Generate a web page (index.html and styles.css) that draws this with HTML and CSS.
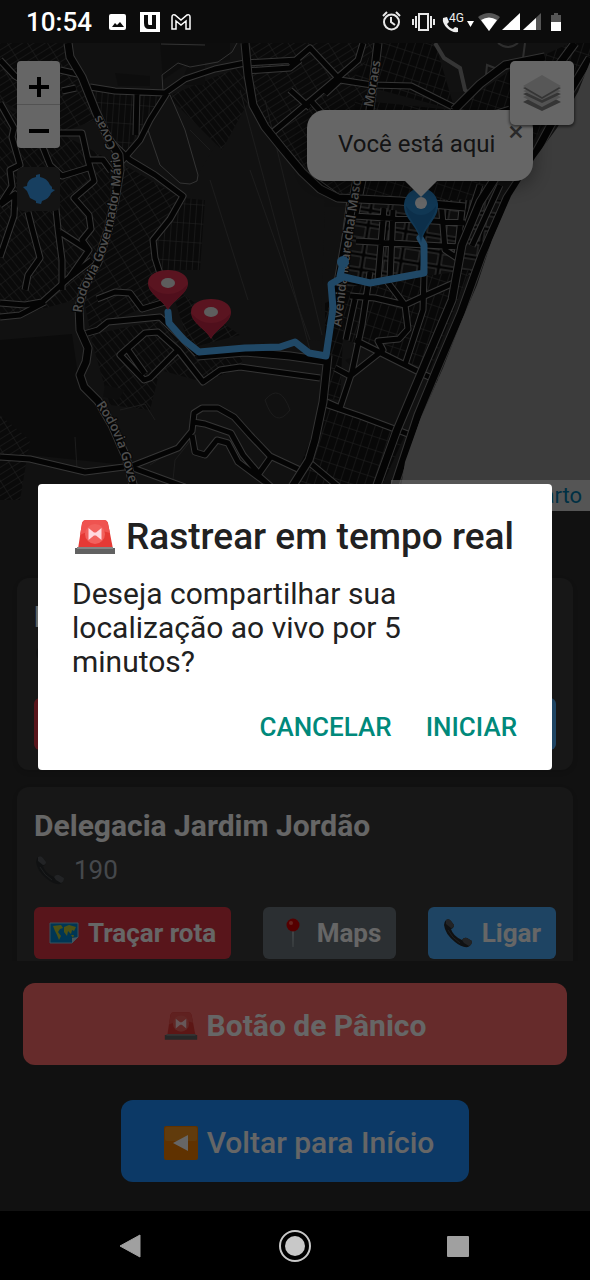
FILE: index.html
```html
<!DOCTYPE html>
<html lang="pt-BR">
<head>
<meta charset="utf-8">
<meta name="viewport" content="width=device-width, initial-scale=1">
<title>Rastrear em tempo real</title>
<link rel="stylesheet" href="styles.css">
</head>
<body>
<svg class="sprite" aria-hidden="true">
  <symbol id="siren" viewBox="0 0 42 36">
    <path d="M8 4Q9 1 12 1H30Q33 1 34 4L39 30H4Z" fill="#e53935"/>
    <path d="M8 5Q9 1 12 1H30Q33 1 34 5L36 14Q21 8 6 16Z" fill="#ef5350"/>
    <circle cx="21" cy="15" r="10" fill="#f2615d"/>
    <path d="M14.500 9L20 13.500H22L27.500 9V21L22 16.500H20L14.500 21Z" fill="#ffd9df"/>
    <path d="M1 29H41V35H1Z" fill="#616161"/><path d="M3 28H39V30H3Z" fill="#858585"/>
  </symbol>
  <symbol id="receiver" viewBox="0 0 30 30">
    <path d="M3 2Q6 0 8 3L11 7Q11 10 8 11Q10 18 19 22Q21 19 24 20L29 23Q29 27 25 29Q19 30 12 24Q2 16 1 7Q1 4 3 2Z" fill="#292c2e"/>
    <path d="M3 2Q6 0 8 3L11 7Q11 10 8 10L3 6ZM19 22Q21 19 24 20L29 23Q29 27 26 28L21 25Z" fill="#55595c"/>
    <path d="M5 12Q9 20 17 25" fill="none" stroke="#4c5052" stroke-width="1"/>
  </symbol>
  <symbol id="worldmap" viewBox="0 0 30 22">
    <path d="M1 1H29V15L23 21H1Z" fill="#0288d1" stroke="#8ecbe8" stroke-width="1"/>
    <path d="M4 4L12 3L14 6L11 7L9 10L12 14L10 18L8 13L6 9ZM15 5L20 3L27 5L25 9L23 8L22 12L19 9L18 14L15 10ZM22 13L25 13L24 16Z" fill="#c0ca33"/>
    <path d="M23 21V16L29 15Z" fill="#b9d7e3"/>
  </symbol>
  <symbol id="pushpin" viewBox="0 0 16 30">
    <path d="M7 12H9L8.500 29H7.500Z" fill="#a3b0b5"/><circle cx="8" cy="7" r="6.500" fill="#d50000"/><circle cx="6" cy="5" r="2" fill="#ff5a50"/>
  </symbol>
  <symbol id="mappin" viewBox="0 0 42 42">
    <path d="M21 41C16 31 1 25 1 14C1 5 11 1 21 1S41 5 41 14C41 25 26 31 21 41Z" fill="#e03352"/>
    <path d="M21 40C16 31 2 25 2 16Q10 25 21 25T40 16C40 25 26 31 21 40Z" fill="#c82746"/>
    <ellipse cx="21" cy="14" rx="7" ry="5" fill="#e8e8e8"/>
  </symbol>
</svg>

<div class="screen">
  <header class="status">
    <time class="clock">10:54</time>
    <svg class="status-left" width="84" height="22" viewBox="0 0 84 22" aria-hidden="true">
      <rect x="0" y="3" width="17" height="16" rx="2" fill="#fff"/><path d="M3 16L6 12L8 14L11 11L15 16Z" fill="#0c0c0c"/>
      <rect x="31" y="1" width="20" height="20" fill="#fff"/><path d="M37 4V12Q37 16 40 16H44M45 4V18" fill="none" stroke="#0c0c0c" stroke-width="4"/>
      <path d="M63 18V6Q63 3 66 4L72 9L78 4Q81 3 81 6V18H77V10L72 14L67 10V18Z" fill="none" stroke="#fff" stroke-width="1.500"/>
    </svg>
    <svg class="status-right" width="182" height="24" viewBox="0 0 182 24" aria-hidden="true">
      <g fill="none" stroke="#e8e8e8" stroke-width="2">
        <circle cx="9.500" cy="12" r="7.500"/><path d="M9 7V12L13 15M1 6L5 2M18 6L14 2"/>
        <rect x="37" y="4" width="9" height="16"/><path d="M34 6V18M49 6V18M31 9V15M52 9V15"/>
      </g>
      <path d="M61 8L65 7L67 12L65 14Q67 18 71 19L73 17L76 18V22Q70 23 65 18T61 8Z" fill="#eee"/>
      <text class="net" x="67" y="12">4G</text>
      <path d="M85 11H92L88.500 17Z" fill="#fff"/>
      <path d="M96 7Q107 -1 118 7L107 21Z" fill="#555"/><path d="M99 10Q107 5 115 10L107 21Z" fill="#fff"/>
      <path d="M138 3V20H120Z" fill="#fff"/>
      <path d="M159 3V20H141Z" fill="#555"/><path d="M154 8V20H141Z" fill="#fff"/>
      <path d="M172 3H176V5H179V21H169V5H172Z" fill="#555"/><path d="M169 12H179V21H169Z" fill="#fff"/>
    </svg>
  </header>

  <main class="app">
    <section class="map" aria-label="Mapa">
      <svg class="tiles" viewBox="0 43 590 468" preserveAspectRatio="xMinYMin slice">
        <defs>
          <pattern id="g1" width="17" height="6" patternUnits="userSpaceOnUse" patternTransform="rotate(-32)"><rect width="17" height="6" fill="#1a1a1a"/><path d="M0 0H17M0 0V6" stroke="#5a5a5a" stroke-width="1"/></pattern>
          <pattern id="g2" width="6" height="19" patternUnits="userSpaceOnUse" patternTransform="rotate(4)"><rect width="6" height="19" fill="#1a1a1a"/><path d="M0 0H6M0 0V19" stroke="#5c5c5c" stroke-width="1"/></pattern>
          <pattern id="g3" width="8" height="13" patternUnits="userSpaceOnUse" patternTransform="rotate(18)"><rect width="8" height="13" fill="#161616"/><path d="M0 0H8M0 0V13" stroke="#585858" stroke-width="1"/></pattern>
          <pattern id="g4" width="14" height="6" patternUnits="userSpaceOnUse" patternTransform="rotate(52)"><rect width="14" height="6" fill="#1a1a1a"/><path d="M0 0H14M0 0V6" stroke="#555" stroke-width="1"/></pattern>
          <pattern id="g5" width="19" height="15" patternUnits="userSpaceOnUse" patternTransform="rotate(9)"><rect width="19" height="15" fill="#0a0a0a"/><rect x="2" y="2" width="15" height="11" fill="#222" stroke="#8a8a8a" stroke-width="1"/></pattern>
          <g id="roads" fill="none" stroke-linejoin="round">
            <path d="M0 60L15 76L40 91M0 103L14 128L12 137L20 165L10 170L12 186L0 205M40 140L50 165L62 176L88 168M60 133L82 133L88 160L103 160L111 171M88 160L94 181L74 198L89 215L91 229L82 240L89 250L70 277M0 205L15 194L14 216L0 257M28 212L32 228L40 258L28 275L25 290M55 200L58 229L62 260L62 290M60 232L88 250M60 70L82 75M62 91L76 88"/>
            <path d="M90 87L115 91L165 93L185 79L215 69L245 63L298 60M245 71L290 68L300 60M167 93L150 120L140 140L121 162M137 92L136 135M107 138L130 160L155 175L183 196L170 219L153 240L155 258L162 280M272 133L290 118L335 80L358 60L363 43M290 65L310 48L340 80L372 85L411 86L455 108M310 108L290 90M340 80L325 94M311 101L335 127"/>
            <path d="M0 303L25 305L42 302L70 277L92 260M0 317L20 315L45 302M84 334L98 330L108 322L160 317L182 338L197 354M97 299L115 292L130 293L142 309L152 306L165 302M120 355L145 333L158 332L178 350L150 378L144 380ZM128 350L145 374M178 350L203 382L220 370L240 367L320 378M0 457L30 459L85 472L132 466L178 448L192 431L194 413L202 408L218 408L234 417L250 435L270 456L300 470M193 422L205 424L231 433L243 455L260 475M192 435L195 452L205 455L217 440L228 443L238 462L265 482M133 468L185 487M270 458L258 475L275 490"/>
            <path d="M370 272L362 325L352 372L340 408M355 299L346 340M350 296L375 298L405 305L408 329L399 339L378 341L383 350L350 376L335 368M405 305L420 298L456 282M386 280L405 305M424 275L423 310L405 365M355 340L425 375L440 382M322 403L360 416L408 434M340 408L324 401M354 216L465 223M356 241L460 247M390 280L393 210M378 280L384 208M441 200L445 250L460 260M463 200L457 255M480 185L462 240M500 185L472 246M350 200L338 290M300 170L335 195M363 180L356 214M310 463L340 488"/>
          </g>
          <g id="trunks" fill="none" stroke-linejoin="round">
            <path d="M68 43L70 57L82 77L96 112L108 138L119 155L120 170L115 200L108 230L98 262L84 287L79 307L80 330L88 348L86 362L80 375L84 387L98 401L112 425L126 457L134 488"/>
            <path d="M245 43L248 75L253 105L265 127L282 148L302 172L320 189L338 198L400 201L465 207"/>
            <path d="M328 355L323 402L315 440L309 460L290 490M197 356L245 352L290 356L325 361M378 43L370 110L352 205L333 310"/>
            <path d="M454 110L480 84L505 65L545 57M575 43L535 97L510 155L480 202L462 245L452 300L433 345L416 385L397 430L376 488M590 58L560 108L532 160L507 198L482 255L461 313L440 362L418 415L394 488M450 112L478 120L510 110"/>
          </g>
          <path id="covas" d="M82 313Q83 296 95 275Q109 249 115 215Q123 180 120 160Q113 135 97 110"/>
          <path id="rodovia" d="M96 405Q112 426 121 454L134 500"/>
          <path id="avenida" d="M341 327L352 240L367 140L382 54"/>
        </defs>
        <rect y="43" width="590" height="468" fill="#2b2b2b"/>
        <path d="M0 340L72 334L78 375L110 430L126 465L0 452Z" fill="#1c1c1c"/>
        <path d="M180 205L243 100L325 200L320 340L190 345Z" fill="#2c2c2c"/>
        <path d="M0 43H65L95 120L60 133L0 100Z" fill="url(#g1)"/>
        <path d="M0 105L60 133L110 160L110 235L75 300L0 320Z" fill="url(#g4)"/>
        <path d="M92 90H165L121 160Z" fill="url(#g2)"/><path d="M168 96L242 66L252 95L222 150Z" fill="url(#g4)"/>
        <path d="M124 165L180 197L150 240L162 300L90 330L84 300L115 220Z" fill="url(#g1)"/>
        <path d="M183 198L205 200L200 270L160 270L153 240Z" fill="url(#g2)"/>
        <path d="M90 335L160 320L195 354L240 350L243 367L203 382L160 370L150 410L110 405Z" fill="url(#g4)"/>
        <path d="M170 285L240 335L190 348Z" fill="url(#g1)"/>
        <path d="M250 43H380L350 200L302 172L255 108Z" fill="url(#g1)"/><path d="M380 43H435L455 110L350 82Z" fill="url(#g3)"/>
        <path d="M355 100L452 110L508 72L570 43H590V60L530 145L470 200L352 200Z" fill="url(#g3)"/>
        <path d="M346 200H510L480 270L455 285L340 290Z" fill="url(#g5)"/>
        <path d="M340 288L470 270L430 370L345 340Z" fill="url(#g3)"/><path d="M325 405L405 435L380 490H290Z" fill="url(#g3)"/>
        <path d="M325 303L345 295L340 400L325 398Z" fill="url(#g3)"/><path d="M0 415L30 440L20 500H0Z" fill="url(#g1)"/>
        <path d="M345 375L382 350L425 375L402 430L342 407Z" fill="#2a2a2a"/>
        <path d="M105 385L125 390L118 400L103 397ZM345 360L358 355L355 370ZM190 60H205V85H180ZM115 73L150 76V86H118ZM170 43H230V60L185 65L163 80L160 43Z" fill="#222"/>
        <path d="M163 92L162 75L178 63L190 67L218 62L232 52L237 43M170 95L185 130L198 175L197 181L190 184L180 183L160 165L148 130M161 44L205 45" fill="none" stroke="#808080" stroke-width="1"/>
        <path d="M240 90L310 350M190 130L210 150M210 180L248 300M265 100L322 335M250 170L310 340M75 437L77 469M173 480L175 460L195 435M120 410L145 404L155 420M265 400Q280 382 290 410Q275 430 265 400M150 465L180 445" fill="none" stroke="#484848" stroke-width="1"/>
        <path d="M435 43L444 58L460 68L465 90L470 94" fill="none" stroke="#858585" stroke-width="4"/><path d="M498 43Q508 51 518 43M485 85L487 65L500 70L522 66L525 43" fill="none" stroke="#747474" stroke-width="2"/>
        <g class="minor-case"><use href="#roads"/></g><g class="minor-core"><use href="#roads"/></g>
        <g class="major-case"><use href="#trunks"/></g><g class="major-core"><use href="#trunks"/></g>
        <path d="M590 62L578 92L557 128L535 158L511 196L492 240L477 285L462 320L443 368L420 420L405 462L397 511H590Z" fill="#979797"/>
        <g class="road-name">
          <text><textPath href="#covas">Rodovia Governador Mário Covas</textPath></text>
          <text><textPath href="#rodovia">Rodovia Gove</textPath></text>
          <text><textPath href="#avenida">Avenida Marechal Mascarenhas de Moraes</textPath></text>
        </g>
        <path class="route" d="M168 312L169 323L184 340L199 352L245 348L280 347L295 342L309 353L326 356L333 308L331 284L343 277M343 262L340 276L370 283L424 273V245L420 238"/>
        <circle cx="343" cy="262" r="6" fill="#52b4ff"/>
        <use href="#mappin" x="147" y="269" width="42" height="42"/><use href="#mappin" x="190" y="298" width="42" height="42"/>
        <path d="M421 243C418 225 403 219 404 204C405 194 413 188 421 188S437 194 438 204C439 219 425 225 421 243Z" fill="#2a8ad0"/>
        <path d="M421 240C419 226 406 217 406 206Q413 215 421 215T436 206C436 217 423 226 421 240Z" fill="#1f76b8"/><circle cx="421" cy="203" r="6" fill="#fff"/>
      </svg>
      <div class="popup"><p>Você está aqui</p><button class="popup-close" aria-label="Fechar">×</button></div>
      <div class="zoom"><button aria-label="Aproximar"><svg viewBox="0 0 20 20"><path d="M10 0V20M0 10H20"/></svg></button><button aria-label="Afastar"><svg viewBox="0 0 20 20"><path d="M0 10H20"/></svg></button></div>
      <button class="locate" aria-label="Minha localização"><svg width="32" height="32" viewBox="0 0 32 32"><path d="M13 2L17 1V4Q24 5 27 12L29 14V16L32 17L28 20Q27 25 19 28L18 31L13 30V28L7 25L4 18L0 14L4 13Q4 6 13 4Z" fill="#3b9df0"/></svg></button>
      <button class="layers" aria-label="Camadas"><svg width="40" height="38" viewBox="0 0 40 38"><path d="M20 18L39 28L20 37L1 28Z" fill="#858585"/><path d="M20 15L39 23L20 33L1 23Z" fill="#d0d0d0"/><path d="M20 12L39 20L20 29L1 20Z" fill="#858585"/><path d="M20 10L39 17L20 26L1 17Z" fill="#d0d0d0"/><path d="M20 6L39 14L20 25L1 14Z" fill="#858585"/><path d="M20 1L39 12L20 23L1 12Z" fill="#dadada"/></svg></button>
      <div class="credit"><a href="#leaflet">Leaflet</a> | © <a href="#carto">Carto</a></div>
    </section>

    <section class="list">
      <article class="card">
        <h2>Delegacia</h2>
        <p class="phone"><svg><use href="#receiver"/></svg>190</p>
        <div class="actions"><button class="btn red"><svg><use href="#worldmap"/></svg>Traçar rota</button><button class="btn gray"><svg><use href="#pushpin"/></svg>Maps</button><button class="btn blue"><svg><use href="#receiver"/></svg>Ligar</button></div>
      </article>
      <article class="card">
        <h2>Delegacia Jardim Jordão</h2>
        <p class="phone"><svg><use href="#receiver"/></svg>190</p>
        <div class="actions"><button class="btn red"><svg><use href="#worldmap"/></svg>Traçar rota</button><button class="btn gray"><svg><use href="#pushpin"/></svg>Maps</button><button class="btn blue"><svg><use href="#receiver"/></svg>Ligar</button></div>
      </article>
    </section>

    <footer class="footer">
      <button class="panic"><svg><use href="#siren"/></svg>Botão de Pânico</button>
      <button class="back"><svg viewBox="0 0 34 34"><rect width="34" height="34" rx="2" fill="#ef7d00"/><rect x="1" y="1" width="32" height="14" rx="2" fill="#f39320"/><path d="M24 9V25L9 17Z" fill="#fff"/></svg>Voltar para Início</button>
    </footer>

    <div class="scrim">
      <div class="dialog" role="alertdialog" aria-labelledby="dt" aria-describedby="dm">
        <h1 id="dt"><svg><use href="#siren"/></svg>Rastrear em tempo real</h1>
        <p id="dm">Deseja compartilhar sua localização ao vivo por 5 minutos?</p>
        <div class="choices"><button>CANCELAR</button><button>INICIAR</button></div>
      </div>
    </div>
  </main>

  <nav class="nav">
    <button aria-label="Voltar"><svg width="34" height="34" viewBox="0 0 34 34"><path d="M27 6V28L7 17Z" fill="#a0a0a0" stroke="#a0a0a0" stroke-linejoin="round"/></svg></button>
    <button aria-label="Início"><svg width="34" height="34" viewBox="0 0 34 34"><circle cx="17" cy="17" r="15" fill="none" stroke="#c8c8c8" stroke-width="2"/><circle cx="17" cy="17" r="10" fill="#c8c8c8"/></svg></button>
    <button aria-label="Recentes"><svg width="34" height="34" viewBox="0 0 34 34"><rect x="4" y="7" width="22" height="21" rx="1" fill="#a0a0a0"/></svg></button>
  </nav>
</div>
</body>
</html>
```
FILE: styles.css
```css
* { box-sizing: border-box; }
body { margin: 0; background: #000; font-family: Roboto, "Noto Sans", sans-serif; }
button { border: 0; margin: 0; padding: 0; background: none; font: inherit; color: inherit; }
h1, h2, p { margin: 0; }
svg { display: block; flex: none; }
.sprite { position: absolute; width: 0; height: 0; }

.screen { height: 100vh; display: flex; flex-direction: column; }

.status { flex: none; height: 43px; padding: 0 26px; display: flex; align-items: center; background: #0c0c0c; color: #fff; }
.clock { font-size: 26px; font-weight: 500; line-height: 32px; }
.status-left { margin-left: 17px; }
.status-right { margin-left: auto; }
.net { font: 400 12px Roboto, sans-serif; fill: #eee; }

.app { position: relative; flex: 1; min-height: 0; display: flex; flex-direction: column; background: #2c2c2c; }

.map { position: relative; flex: none; height: 468px; overflow: hidden; }
.tiles { width: 100%; height: 100%; }
.minor-case { stroke: #868686; stroke-width: 7px; }
.minor-core { stroke: #0c0c0c; stroke-width: 5px; }
.major-case { stroke: #808080; stroke-width: 9px; }
.major-core { stroke: #0a0a0a; stroke-width: 7px; }
.road-name { font: 600 13px "Open Sans", sans-serif; fill: #c4c4c4; stroke: #111; stroke-width: 2px; paint-order: stroke; }
.route { fill: none; stroke: #52b4ff; stroke-width: 7px; stroke-linejoin: round; stroke-linecap: round; }

.popup { position: absolute; top: 67px; left: 307px; width: 226px; padding: 17px 31px 19px; border-radius: 18px; background: #fff; box-shadow: 0 4px 20px rgba(0, 0, 0, .4); color: #333; font-size: 24px; line-height: 35px; white-space: nowrap; }
.popup::after { content: ""; position: absolute; top: 100%; left: 98px; border: 16px solid transparent; border-top-color: #fff; border-bottom: 0; }
.popup-close { position: absolute; top: 6px; right: 8px; width: 18px; font-size: 28px; line-height: 32px; color: #666; }
.zoom { position: absolute; top: 18px; left: 17px; width: 43px; border-radius: 4px; background: #fff; }
.zoom button { display: flex; align-items: center; justify-content: center; width: 100%; height: 43px; padding-top: 8px; }
.zoom button + button { border-top: 1px solid #ccc; height: 44px; }
.zoom svg { width: 20px; height: 20px; fill: none; stroke: #000; stroke-width: 4px; }
.locate { position: absolute; top: 124px; left: 17px; display: grid; place-items: center; width: 43px; height: 44px; border-radius: 6px; background: #333; }
.layers { position: absolute; top: 18px; right: 16px; display: grid; place-items: center; width: 64px; height: 64px; border-radius: 5px; background: #fff; box-shadow: 0 1px 3px 1px rgba(0, 0, 0, .5); }
.credit { position: absolute; right: 0; bottom: 0; width: 199px; padding: 0 8px; background: rgba(255, 255, 255, .6); color: #333; font-size: 22px; line-height: 31px; text-align: right; }
.credit a { color: #0078a8; text-decoration: none; }

.list { flex: 1 1 0; min-height: 0; overflow: hidden; padding: 67px 17px 0; display: flex; flex-direction: column; gap: 17px; }
.card { flex: none; padding: 20px 17px; border-radius: 12px; background: #3a3a3a; box-shadow: 0 2px 8px rgba(0, 0, 0, .2); color: #fff; }
.card h2 { font-size: 30px; line-height: 38px; font-weight: 700; }
.phone { display: flex; align-items: center; gap: 8px; margin: 8px 0 20px; color: #adb5bd; font-size: 26px; line-height: 34px; }
.phone svg { width: 32px; height: 30px; }
.actions { display: flex; justify-content: space-between; }
.btn { display: flex; align-items: center; gap: 9px; height: 52px; padding: 0 15px; border-radius: 6px; color: #fff; font-size: 26px; font-weight: 700; }
.btn svg { width: 30px; height: 30px; }
.red { background: #dc3545; }
.gray { background: #6c757d; }
.blue { background: #4dabf7; }

.footer { flex: none; padding: 22px 23px 29px; display: flex; flex-direction: column; align-items: center; gap: 35px; }
.panic, .back { display: flex; align-items: center; justify-content: center; gap: 9px; height: 82px; border-radius: 12px; color: #fff; font-size: 30px; padding-top: 3px; }
.panic { width: 100%; background: #ff6b6b; font-weight: 700; }
.back { padding-left: 43px; padding-right: 35px; background: #1e90ff; font-weight: 500; }
.panic svg, .back svg { width: 34px; height: 34px; }

.scrim { position: absolute; inset: 0; z-index: 5; display: grid; align-items: center; padding: 0 38px; background: rgba(0, 0, 0, .6); }
.dialog { padding: 30px 18px 17px 34px; border-radius: 4px; background: #fff; color: #212121; }
.dialog h1 { display: flex; align-items: center; gap: 10px; font-size: 37px; line-height: 46px; font-weight: 500; white-space: nowrap; }
.dialog h1 svg { width: 42px; height: 36px; margin-left: 2px; }
.dialog p { margin-top: 17px; padding-right: 80px; font-size: 30px; line-height: 34px; }
.choices { display: flex; justify-content: flex-end; gap: 34px; margin: 22px 17px 0 0; color: #00897b; font-size: 26px; line-height: 52px; font-weight: 500; }

.nav { flex: none; height: 69px; padding: 0 113px; display: flex; align-items: center; justify-content: space-between; background: #000; }
```
